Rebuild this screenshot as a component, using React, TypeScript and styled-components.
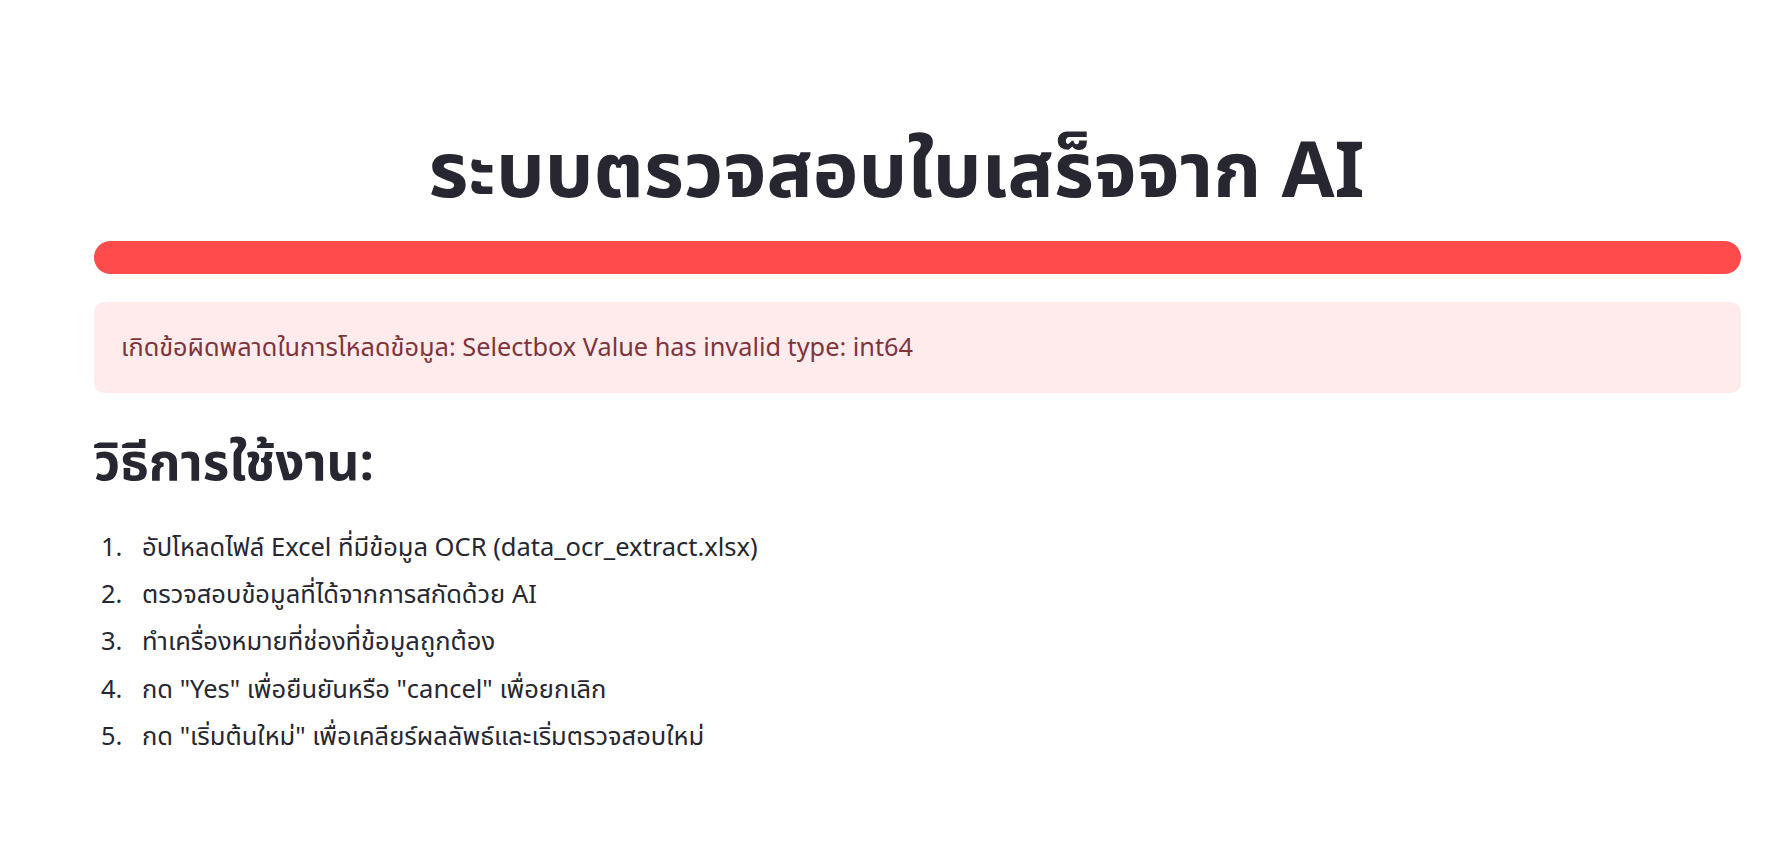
import styled, { createGlobalStyle } from "styled-components";

const GlobalStyle = createGlobalStyle`
  html, body {
    margin: 0;
    padding: 0;
    background: #ffffff;
  }
  body {
    font-family: "Source Sans Pro", "Noto Sans Thai", "Noto Sans", "DejaVu Sans", sans-serif;
    color: #262730;
  }
`;

const Main = styled.main`
  display: flex;
  flex-direction: column;
  padding: 128px 28px 60px 94px;
`;

const Title = styled.h1`
  margin: 0;
  padding-right: 42px;
  font-size: 77px;
  font-weight: 700;
  line-height: 1.2;
  text-align: center;
  color: #262730;
`;

const Divider = styled.div`
  height: 33px;
  margin-top: 21px;
  border-radius: 17px;
  background: #ff4b4b;
`;

const Alert = styled.div`
  margin-top: 28px;
  padding: 0 27px;
  height: 91px;
  display: flex;
  align-items: center;
  border-radius: 10px;
  background: #ffebec;
  color: #7d353b;
  font-size: 25.3px;
`;

const Heading = styled.h2`
  margin: 39px 0 0;
  font-size: 51px;
  font-weight: 700;
  line-height: 1.3;
  color: #262730;
`;

const Steps = styled.ol`
  margin: 32px 0 0;
  padding: 0;
  list-style: none;
  counter-reset: step;
  font-size: 25.5px;
  line-height: 35px;
  color: #262730;
`;

const Step = styled.li`
  display: flex;
  margin-bottom: 12.4px;
  counter-increment: step;

  &::before {
    content: counter(step) ".";
    flex: 0 0 41px;
    padding-left: 7px;
  }
`;

const steps = [
  "อัปโหลดไฟล์ Excel ที่มีข้อมูล OCR (data_ocr_extract.xlsx)",
  "ตรวจสอบข้อมูลที่ได้จากการสกัดด้วย AI",
  "ทำเครื่องหมายที่ช่องที่ข้อมูลถูกต้อง",
  'กด "Yes" เพื่อยืนยันหรือ "cancel" เพื่อยกเลิก',
  'กด "เริ่มต้นใหม่" เพื่อเคลียร์ผลลัพธ์และเริ่มตรวจสอบใหม่',
];

export default function App() {
  return (
    <>
      <GlobalStyle />
      <Main>
        <Title>ระบบตรวจสอบใบเสร็จจาก AI</Title>
        <Divider />
        <Alert>
          เกิดข้อผิดพลาดในการโหลดข้อมูล: Selectbox Value has invalid type: int64
        </Alert>
        <Heading>วิธีการใช้งาน:</Heading>
        <Steps>
          {steps.map((s) => (
            <Step key={s}>{s}</Step>
          ))}
        </Steps>
      </Main>
    </>
  );
}
